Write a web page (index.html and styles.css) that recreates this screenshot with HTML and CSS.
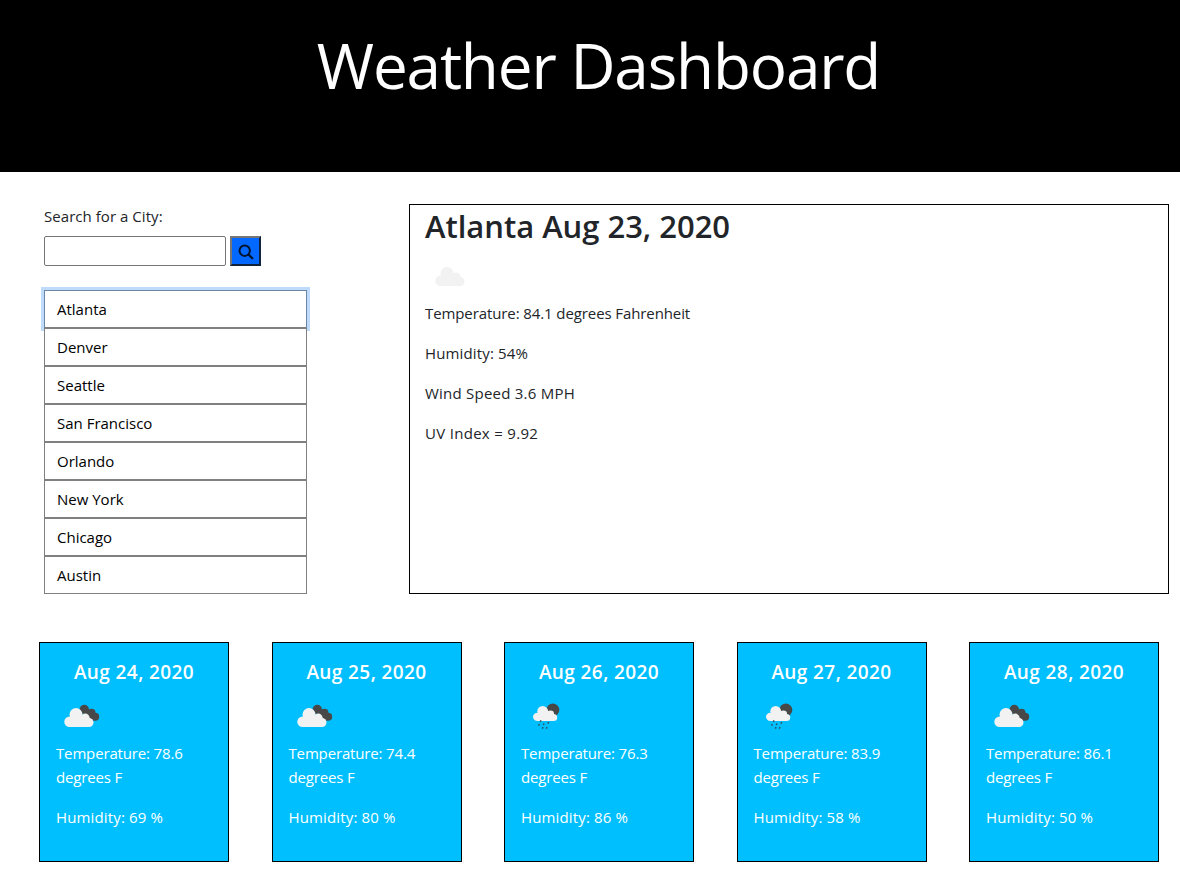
FILE: index.html
```html
<!DOCTYPE html>
<html lang="en">
<head>
<meta charset="utf-8">
<title>Weather Dashboard</title>
<link rel="stylesheet" href="styles.css">
</head>
<body>
<svg class="defs" aria-hidden="true">
  <defs>
    <g id="puff" fill="#f2f2f2"><circle cx="20" cy="23.500" r="6.500"/><circle cx="13.600" cy="30.700" r="5.300"/><circle cx="29.300" cy="27" r="4.400"/><circle cx="33" cy="31.500" r="4.500"/><path d="M13.600 36v-9l6-3 9 0 5 12z"/></g>
  </defs>
  <symbol id="cloud" viewBox="0 0 50 50"><use href="#puff" x="2" y="-1"/></symbol>
  <symbol id="broken" viewBox="0 0 50 50"><g fill="#484848"><circle cx="28.300" cy="18.500" r="4.700"/><circle cx="35.500" cy="21.700" r="4"/><circle cx="39.200" cy="25.800" r="4"/><path d="M28 20h8l2 9.800-6-1z"/></g><use href="#puff"/></symbol>
  <symbol id="rain" viewBox="0 0 50 50"><circle cx="31.800" cy="19" r="6.500" fill="#484848"/><use href="#puff" transform="translate(5.100 1.600) scale(.83 .79)"/><path stroke="#32505f" stroke-width="1.500" d="M20.100 29.300l-.8 1.500M18.400 33.200l-.8 1.500M23.100 32.500l-.8 1.500M27.700 31.200l-.8 1.500M22.100 36.200l-.8 1.500M26.100 36.200l-.8 1.500"/></symbol>
</svg>
<header class="banner"><h1>Weather Dashboard</h1></header>
<main class="overview">
  <section class="search">
    <label for="city">Search for a City:</label>
    <div class="search-row">
      <input id="city" type="text">
      <button class="search-btn" aria-label="Search"><svg viewBox="0 0 16 16"><circle cx="6.700" cy="6.700" r="5.200" fill="none" stroke="#00142e" stroke-width="2"/><path d="M10.700 10.700l3.600 3.600" stroke="#00142e" stroke-width="2.300" stroke-linecap="round"/></svg></button>
    </div>
    <div class="cities">
      <button class="city active">Atlanta</button>
      <button class="city">Denver</button>
      <button class="city">Seattle</button>
      <button class="city">San Francisco</button>
      <button class="city">Orlando</button>
      <button class="city">New York</button>
      <button class="city">Chicago</button>
      <button class="city">Austin</button>
    </div>
  </section>
  <section class="current">
    <h2>Atlanta Aug 23, 2020</h2>
    <svg class="icon"><use href="#cloud"/></svg>
    <p class="temp">Temperature: 84.1 degrees Fahrenheit</p>
    <p class="humidity">Humidity: 54%</p>
    <p class="wind">Wind Speed 3.6 MPH</p>
    <p class="uv">UV Index = 9.92</p>
  </section>
</main>
<section class="forecast">
  <article class="card"><h3>Aug 24, 2020</h3><svg class="icon"><use href="#broken"/></svg><p class="temp">Temperature: 78.6<br>degrees F</p><p class="humidity">Humidity: 69 %</p></article>
  <article class="card"><h3>Aug 25, 2020</h3><svg class="icon"><use href="#broken"/></svg><p class="temp">Temperature: 74.4<br>degrees F</p><p class="humidity">Humidity: 80 %</p></article>
  <article class="card"><h3>Aug 26, 2020</h3><svg class="icon"><use href="#rain"/></svg><p class="temp">Temperature: 76.3<br>degrees F</p><p class="humidity">Humidity: 86 %</p></article>
  <article class="card"><h3>Aug 27, 2020</h3><svg class="icon"><use href="#rain"/></svg><p class="temp">Temperature: 83.9<br>degrees F</p><p class="humidity">Humidity: 58 %</p></article>
  <article class="card"><h3>Aug 28, 2020</h3><svg class="icon"><use href="#broken"/></svg><p class="temp">Temperature: 86.1<br>degrees F</p><p class="humidity">Humidity: 50 %</p></article>
</section>
</body>
</html>
```
FILE: styles.css
```css
* { box-sizing: border-box; }
body {
  margin: 0;
  background: #fff;
  color: #212529;
  font: 15px/24px "Open Sans", "Noto Sans", sans-serif;
  letter-spacing: 0.05px;
  overflow: hidden;
}
h1, h2, h3, p { margin: 0; white-space: nowrap; }
.defs { position: absolute; width: 0; height: 0; }
.banner {
  height: 172px;
  padding: 27px 0 0 17px;
  background: #000;
  color: #fff;
  text-align: center;
}
h1 { font-size: 62px; font-weight: 400; line-height: 77px; letter-spacing: -1.15px; }
.overview {
  display: grid;
  grid-template-columns: 263px 760px;
  column-gap: 102px;
  padding: 32px 0 0 44px;
}
.search label { display: block; margin-bottom: 8px; }
.search-row { display: flex; gap: 4px; margin-bottom: 24px; }
.search-row input {
  width: 182px;
  height: 30px;
  border: 1px solid #767676;
  border-radius: 2px;
}
.search-btn {
  width: 31px;
  height: 30px;
  padding: 0;
  display: flex;
  align-items: center;
  justify-content: center;
  background: #0368ff;
  border: 2px solid;
  border-color: #767676 #12233c #12233c #767676;
}
.search-btn svg { width: 16px; height: 16px; margin-top: 2px; }
.cities { display: flex; flex-direction: column; }
.city {
  height: 38px;
  padding: 0 12px;
  background: #fff;
  border: 1px solid #808080;
  color: #000;
  font: inherit;
  letter-spacing: 0;
  text-align: left;
}
.city.active { border-color: #6c87a5; border-bottom-color: #808080; box-shadow: 0 0 0 3px #bfdbfb; }
.city:not(.active) { position: relative; }
.current { height: 390px; border: 1px solid #000; padding: 2px 15px; }
h2 { font-size: 31px; font-weight: 600; line-height: 38px; letter-spacing: -0.03px; margin-bottom: 6px; }
.icon { display: block; width: 50px; height: 50px; }
.temp { letter-spacing: -0.1px; }
.humidity { letter-spacing: 0.15px; }
.wind { letter-spacing: 0.23px; }
.uv { letter-spacing: 0.3px; }
.current p { margin-bottom: 16px; }
.forecast {
  display: grid;
  grid-template-columns: repeat(5, 190px);
  column-gap: 42.5px;
  padding: 48px 0 0 39px;
}
.card {
  height: 220px;
  padding: 17px 16px 0;
  background: #00bfff;
  border: 1px solid #000;
  color: #fff;
}
h3 { font-size: 19px; font-weight: 600; line-height: 24px; letter-spacing: 0.4px; text-align: center; margin-bottom: 7px; }
.card p { margin-bottom: 16px; }
.card .temp { letter-spacing: -0.15px; }
```
